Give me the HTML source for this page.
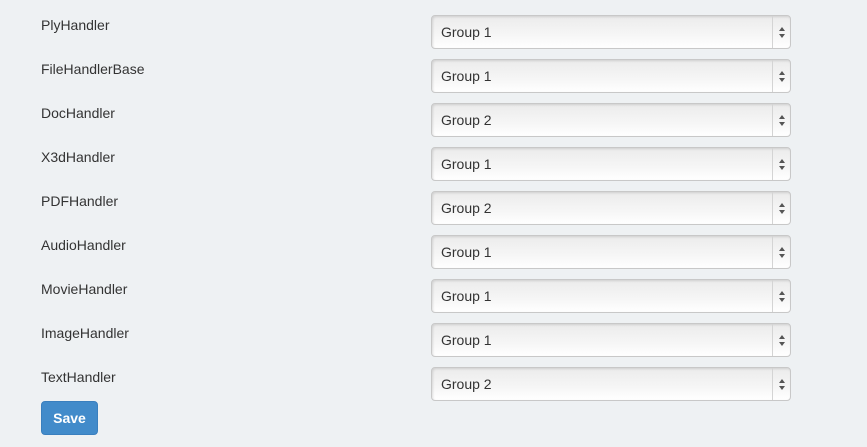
<!DOCTYPE html>
<html><head><meta charset="utf-8"><style>
html,body{margin:0;padding:0;}
body{width:867px;height:447px;background:#eef1f3;font-family:"Liberation Sans",Helvetica,Arial,sans-serif;position:relative;overflow:hidden;}
.lbl{position:absolute;left:41px;font-size:14px;color:#333;}
.sel{position:absolute;left:431px;width:358px;height:32px;border:1px solid #c8c8c8;border-radius:4px;
background:linear-gradient(#ebebeb,#f6f6f6 60%,#ffffff);box-shadow:inset 1px 1px 2px rgba(0,0,0,0.12);}
.sel span{position:absolute;left:9px;top:8px;font-size:14px;color:#333;}
.sel i{position:absolute;left:340px;top:0;width:1px;height:32px;background:#d4d4d4;}
.sel svg{position:absolute;left:346px;top:10px;}
.btn{position:absolute;left:41px;top:401px;width:55px;height:32px;border:1px solid #3a7fbe;border-radius:4px;background:#428bca;color:#fff;font-size:14px;font-weight:bold;text-align:center;line-height:32px;}
</style></head><body>
<div class="lbl" style="top:17px">PlyHandler</div>
<div class="sel" style="top:15px"><span>Group 1</span><i></i><svg width="8" height="13"><path d="M4 1L7 5H1Z M4 12L7 8H1Z" fill="#555"/></svg></div>
<div class="lbl" style="top:61px">FileHandlerBase</div>
<div class="sel" style="top:59px"><span>Group 1</span><i></i><svg width="8" height="13"><path d="M4 1L7 5H1Z M4 12L7 8H1Z" fill="#555"/></svg></div>
<div class="lbl" style="top:105px">DocHandler</div>
<div class="sel" style="top:103px"><span>Group 2</span><i></i><svg width="8" height="13"><path d="M4 1L7 5H1Z M4 12L7 8H1Z" fill="#555"/></svg></div>
<div class="lbl" style="top:149px">X3dHandler</div>
<div class="sel" style="top:147px"><span>Group 1</span><i></i><svg width="8" height="13"><path d="M4 1L7 5H1Z M4 12L7 8H1Z" fill="#555"/></svg></div>
<div class="lbl" style="top:193px">PDFHandler</div>
<div class="sel" style="top:191px"><span>Group 2</span><i></i><svg width="8" height="13"><path d="M4 1L7 5H1Z M4 12L7 8H1Z" fill="#555"/></svg></div>
<div class="lbl" style="top:237px">AudioHandler</div>
<div class="sel" style="top:235px"><span>Group 1</span><i></i><svg width="8" height="13"><path d="M4 1L7 5H1Z M4 12L7 8H1Z" fill="#555"/></svg></div>
<div class="lbl" style="top:281px">MovieHandler</div>
<div class="sel" style="top:279px"><span>Group 1</span><i></i><svg width="8" height="13"><path d="M4 1L7 5H1Z M4 12L7 8H1Z" fill="#555"/></svg></div>
<div class="lbl" style="top:325px">ImageHandler</div>
<div class="sel" style="top:323px"><span>Group 1</span><i></i><svg width="8" height="13"><path d="M4 1L7 5H1Z M4 12L7 8H1Z" fill="#555"/></svg></div>
<div class="lbl" style="top:369px">TextHandler</div>
<div class="sel" style="top:367px"><span>Group 2</span><i></i><svg width="8" height="13"><path d="M4 1L7 5H1Z M4 12L7 8H1Z" fill="#555"/></svg></div>
<div class="btn">Save</div>
</body></html>
